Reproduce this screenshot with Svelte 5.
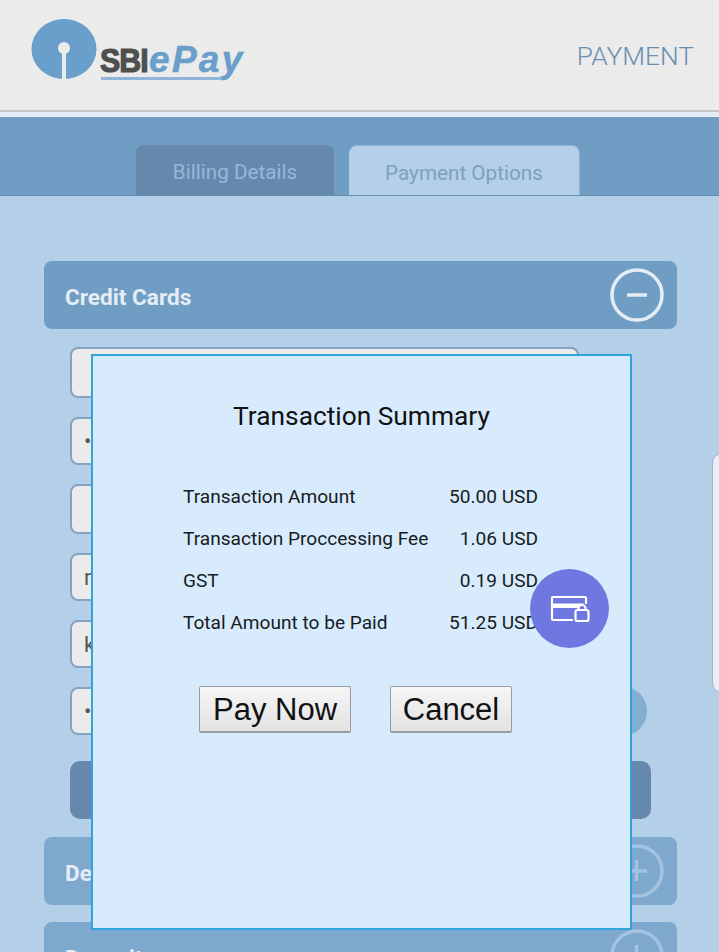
<script>
  const inputs = [
    { text: '', height: 51, gap: 19 },
    { text: '•', height: 48, gap: 19 },
    { text: '', height: 50, gap: 19 },
    { text: 'r', height: 48, gap: 19 },
    { text: 'k', height: 48, gap: 19 },
    { text: '•', height: 48, gap: 0 }
  ];

  const summary = [
    { label: 'Transaction Amount', value: '50.00 USD' },
    { label: 'Transaction Proccessing Fee', value: '1.06 USD' },
    { label: 'GST', value: '0.19 USD' },
    { label: 'Total Amount to be Paid', value: '51.25 USD' }
  ];
</script>

<div class="page">
  <header class="top">
    <div class="logo">
      <svg class="mark" width="67" height="60" viewBox="0 0 67 60">
        <ellipse cx="33" cy="30" rx="32.500" ry="30" fill="#6a9ecb" />
        <rect x="31" y="33" width="4" height="27" fill="#ebebeb" />
        <circle cx="33" cy="29" r="6" fill="#ebebeb" />
      </svg>
      <div class="wordmark">
        <span class="sbi">SBI</span><span class="epay">ePay</span>
        <i class="rule"></i>
      </div>
    </div>
    <span class="heading">PAYMENT</span>
  </header>

  <nav class="tabs">
    <div class="tab billing">Billing Details</div>
    <div class="tab options">Payment Options</div>
  </nav>

  <main class="content">
    <section class="bar">
      <span>Credit Cards</span>
      <svg class="toggle" width="54" height="54" viewBox="0 0 54 54">
        <circle cx="27" cy="27" r="25" />
        <path d="M17 27h20" />
      </svg>
    </section>

    <div class="fields">
      {#each inputs as field}
        <div class="field" style="height: {field.height}px; margin-bottom: {field.gap}px">{field.text}</div>
      {/each}
      <i class="help"></i>
    </div>

    <div class="submit"></div>

    <section class="bar dim">
      <span>Debit Cards</span>
      <svg class="toggle" width="54" height="54" viewBox="0 0 54 54">
        <circle cx="27" cy="27" r="25" />
        <path d="M16 27h21M26.500 16v21" />
      </svg>
    </section>

    <section class="bar dim">
      <span>Deposit</span>
      <svg class="toggle" width="54" height="54" viewBox="0 0 54 54">
        <circle cx="27" cy="27" r="25" />
        <path d="M16 27h21M26.500 16v21" />
      </svg>
    </section>
  </main>

  <div class="side"></div>

  <div class="modal">
    <h2>Transaction Summary</h2>
    <div class="rows">
      {#each summary as row}
        <div class="row"><span>{row.label}</span><span>{row.value}</span></div>
      {/each}
    </div>
    <div class="actions">
      <button class="pay">Pay Now</button>
      <button class="cancel">Cancel</button>
    </div>
  </div>

  <div class="fab">
    <svg width="40" height="28" viewBox="0 0 40 28" fill="none" stroke="#fff" stroke-width="2.200">
      <path d="M23 25H3a1 1 0 0 1-1-1V3a1 1 0 0 1 1-1h32a1 1 0 0 1 1 1v6" />
      <path d="M2 8.500h32l-6 4.500H2z" fill="#fff" stroke="none" />
      <rect x="25.500" y="15" width="13" height="11" rx="2" />
      <path d="M28.500 15v-1.500a3.500 3.500 0 0 1 7 0V15" />
    </svg>
  </div>
</div>

<style>
  :global(body) {
    background: #b3d0e8;
  }

  .page {
    position: relative;
    height: 952px;
    overflow: hidden;
    font-family: Roboto, sans-serif;
    background: #b3d0e8;
  }

  .top {
    box-sizing: border-box;
    height: 112px;
    display: flex;
    justify-content: space-between;
    align-items: flex-start;
    padding: 19px 25px 0 31px;
    background: #ebebeb;
    border-bottom: 2px solid #c6c6c6;
  }

  .logo {
    display: flex;
    align-items: flex-start;
  }

  .mark {
    display: block;
    overflow: visible;
  }

  .wordmark {
    position: relative;
    margin: 21px 0 0 2px;
    height: 40px;
    font: italic 700 37px/40px "Liberation Sans", sans-serif;
    white-space: nowrap;
  }

  .sbi {
    display: inline-block;
    margin-right: -4px;
    color: #4f4f4f;
    font-size: 33px;
    font-style: normal;
    letter-spacing: -1px;
    -webkit-text-stroke: 1.200px #4f4f4f;
    transform: scaleX(0.92);
    transform-origin: left;
  }

  .epay {
    color: #6a9ecb;
    margin-left: 1px;
    letter-spacing: 2.300px;
    -webkit-text-stroke: 0.500px #6a9ecb;
  }

  .rule {
    position: absolute;
    left: 1px;
    width: 121px;
    bottom: 0;
    height: 3px;
    background: #8fb5d8;
  }

  .heading {
    margin-top: 20px;
    font-size: 26.300px;
    font-weight: 300;
    line-height: 34px;
    color: #6c8fb2;
  }

  .tabs {
    box-sizing: border-box;
    height: 84px;
    border-top: 5px solid #e3ecf4;
    display: flex;
    align-items: flex-end;
    gap: 15px;
    padding-left: 136px;
    background: #6f9dc4;
    border-bottom: 1px solid #628db3;
    background-clip: padding-box;
  }

  .tab {
    box-sizing: border-box;
    height: 50px;
    display: flex;
    align-items: center;
    justify-content: center;
    padding-top: 4px;
    font-size: 20.700px;
    border-radius: 8px 8px 0 0;
  }

  .billing {
    width: 198px;
    background: #6788ad;
    color: #93b8dc;
  }

  .options {
    width: 231px;
    background: #b3d0e8;
    color: #809fbd;
    border-top: 1px solid #8fb0cf;
    border-right: 1px solid #8fb0cf;
  }

  .content {
    box-sizing: border-box;
    padding: 65px 42px 0 44px;
  }

  .bar {
    box-sizing: border-box;
    height: 68px;
    display: flex;
    align-items: center;
    justify-content: space-between;
    padding: 0 13.500px 0 21px;
    border-radius: 8px;
    background: #6f9dc4;
    color: #e4edf5;
    font-size: 22.600px;
    font-weight: 700;
  }

  .bar span {
    margin-top: 5px;
  }

  .bar.dim {
    margin-top: 17px;
    background: #7fa8cf;
  }

  .toggle {
    fill: none;
    stroke: #e4edf5;
    stroke-width: 3.500;
  }

  .bar.dim .toggle {
    stroke: #a3c3e0;
  }

  .fields {
    position: relative;
    width: 509px;
    margin: 18px 0 0 26px;
  }

  .field {
    box-sizing: border-box;
    display: flex;
    align-items: center;
    padding-left: 12px;
    border: 2px solid #84a3c2;
    border-radius: 8px;
    background: #ebebeb;
    color: #555;
    font-size: 22px;
  }

  .help {
    position: absolute;
    right: -68px;
    bottom: -1px;
    width: 50px;
    height: 50px;
    border-radius: 50%;
    background: #83add3;
  }

  .submit {
    width: 581px;
    height: 58px;
    margin: 26px 0 18px 26px;
    border-radius: 10px;
    background: #6788ad;
  }

  .side {
    position: absolute;
    left: 712px;
    top: 453px;
    width: 20px;
    height: 240px;
    box-sizing: border-box;
    background: #e8eff6;
    border: 1px solid #a7b4c1;
    border-radius: 10px;
  }

  .modal {
    position: absolute;
    left: 91px;
    top: 354px;
    box-sizing: border-box;
    width: 541px;
    height: 576px;
    padding: 43px 0 0 90px;
    background: #d8ebfd;
    border: 2px solid #2fa5dc;
    color: #111;
  }

  h2 {
    margin: 0;
    padding-right: 90px;
    text-align: center;
    font-size: 26.300px;
    font-weight: 400;
    line-height: 34px;
  }

  .rows {
    width: 355px;
    margin-top: 43px;
  }

  .row {
    display: flex;
    justify-content: space-between;
    height: 42px;
    font-size: 19.100px;
    line-height: 42px;
    color: #161c22;
  }

  .actions {
    display: flex;
    gap: 39px;
    margin: 42px 0 0 16px;
  }

  button {
    height: 47px;
    padding: 0;
    font: 31px/1 "Liberation Sans", Arial, sans-serif;
    color: #111;
    background: linear-gradient(#f6f6f6, #e2e2e2);
    border: 1px solid #989ca0;
    border-bottom-width: 2px;
    border-radius: 2px;
  }

  .pay {
    width: 152px;
  }

  .cancel {
    width: 122px;
  }

  .fab {
    position: absolute;
    left: 530px;
    top: 569px;
    width: 79px;
    height: 79px;
    display: flex;
    align-items: center;
    justify-content: center;
    border-radius: 50%;
    background: #6f77e0;
  }
</style>
